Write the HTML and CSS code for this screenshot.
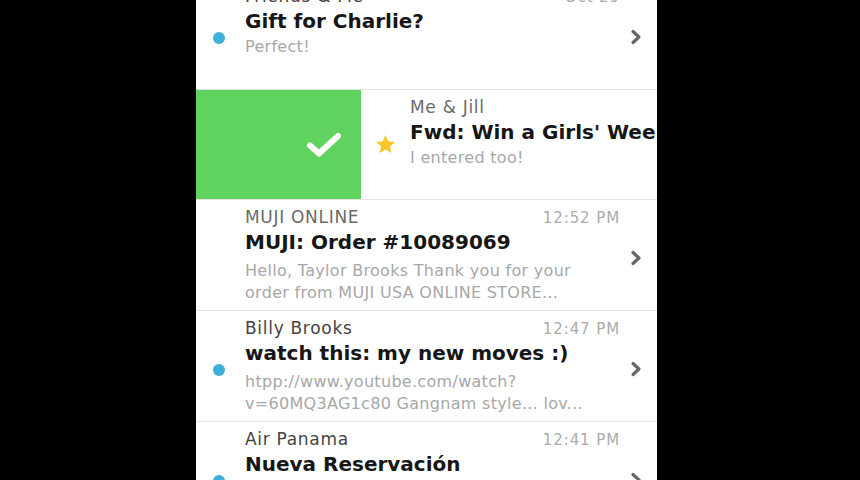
FILE: index.html
```html
<!DOCTYPE html>
<html lang="en">
<head>
<meta charset="utf-8">
<title>Inbox</title>
<link rel="stylesheet" href="styles.css">
</head>
<body>
<div class="screen">
  <div class="list">
    <div class="row">
      <div class="mark"><span class="dot"></span></div>
      <div class="body">
        <div class="head"><span class="sender unread">Friends &amp; Me</span><span class="time">Oct 29</span></div>
        <div class="subject">Gift for Charlie?</div>
        <div class="preview short">Perfect!</div>
      </div>
      <div class="nav"><svg class="chev" viewBox="0 0 12 16"><path d="M3 2.5 L9 8 L3 13.5"/></svg></div>
    </div>

    <div class="row swiped">
      <div class="action"><svg class="check" viewBox="0 0 36 26"><path d="M4 13.5 L13 21.5 L32 4"/></svg></div>
      <div class="content">
        <div class="mark"><svg class="star" viewBox="0 0 24 24"><path d="M12 2.2 L14.9 8.6 L21.9 9.3 L16.6 14 L18.2 20.9 L12 17.3 L5.8 20.9 L7.4 14 L2.1 9.3 L9.1 8.6 Z"/></svg></div>
        <div class="body">
          <div class="head"><span class="sender">Me &amp; Jill</span></div>
          <div class="subject">Fwd: Win a Girls' Weekend</div>
          <div class="preview short">I entered too!</div>
        </div>
      </div>
    </div>

    <div class="row">
      <div class="mark"></div>
      <div class="body">
        <div class="head"><span class="sender">MUJI ONLINE</span><span class="time">12:52 PM</span></div>
        <div class="subject">MUJI: Order #10089069</div>
        <div class="preview">Hello, Taylor Brooks Thank you for your<br>order from MUJI USA ONLINE STORE...</div>
      </div>
      <div class="nav"><svg class="chev" viewBox="0 0 12 16"><path d="M3 2.5 L9 8 L3 13.5"/></svg></div>
    </div>

    <div class="row">
      <div class="mark"><span class="dot"></span></div>
      <div class="body">
        <div class="head"><span class="sender unread">Billy Brooks</span><span class="time">12:47 PM</span></div>
        <div class="subject">watch this: my new moves :)</div>
        <div class="preview">htpp://www.youtube.com/watch?<br>v=60MQ3AG1c80 Gangnam style... lov...</div>
      </div>
      <div class="nav"><svg class="chev" viewBox="0 0 12 16"><path d="M3 2.5 L9 8 L3 13.5"/></svg></div>
    </div>

    <div class="row">
      <div class="mark"><span class="dot"></span></div>
      <div class="body">
        <div class="head"><span class="sender unread">Air Panama</span><span class="time">12:41 PM</span></div>
        <div class="subject">Nueva Reservación</div>
        <div class="preview">Estimado cliente, su reservación ha sido<br>confirmada...</div>
      </div>
      <div class="nav"><svg class="chev" viewBox="0 0 12 16"><path d="M3 2.5 L9 8 L3 13.5"/></svg></div>
    </div>
  </div>
</div>
</body>
</html>
```

FILE: styles.css
```css
html, body {
  margin: 0;
  padding: 0;
  background: #000;
  height: 100%;
  overflow: hidden;
}

.screen {
  margin-left: 196px;
  width: 461px;
  height: 480px;
  background: #fff;
  overflow: hidden;
  font-family: "DejaVu Sans", "Liberation Sans", sans-serif;
}

.list {
  margin-top: -21px;
}

.row {
  display: flex;
  height: 110px;
  border-bottom: 1px solid #e3e3e3;
  background: #fff;
  overflow: hidden;
}

.mark {
  width: 46px;
  flex-shrink: 0;
  display: flex;
  align-items: center;
  justify-content: center;
}

.dot {
  width: 12px;
  height: 12px;
  border-radius: 50%;
  background: #3db0da;
  margin-top: 8px;
}

.star {
  width: 23px;
  height: 23px;
  fill: #f8c52a;
  margin-left: 2px;
}

.body {
  flex: 1;
  min-width: 0;
  padding-left: 3px;
  padding-top: 6px;
}

.head {
  display: flex;
  justify-content: space-between;
  align-items: baseline;
  height: 22px;
}

.sender {
  font-size: 17px;
  line-height: 22px;
  letter-spacing: 0.7px;
  color: #6a6a6a;
  white-space: nowrap;
}

.sender.unread {
  color: #444;
}

.time {
  font-size: 15px;
  line-height: 22px;
  letter-spacing: 0.9px;
  color: #ababab;
  white-space: nowrap;
}

.subject {
  font-size: 20px;
  line-height: 28px;
  font-weight: bold;
  color: #161616;
  white-space: nowrap;
}

.preview {
  margin-top: 4px;
  font-size: 16px;
  line-height: 22px;
  letter-spacing: 0.3px;
  color: #a8a8a8;
  white-space: nowrap;
}

.preview.short {
  margin-top: 1px;
}

.nav {
  width: 37px;
  flex-shrink: 0;
  display: flex;
  align-items: center;
  padding-left: 10px;
  box-sizing: border-box;
}

.chev {
  width: 12px;
  height: 16px;
  margin-top: 5px;
  fill: none;
  stroke: #666;
  stroke-width: 3.2;
  stroke-linecap: round;
  stroke-linejoin: round;
}

.swiped {
  height: 109px;
}

.action {
  width: 165px;
  flex-shrink: 0;
  background: #5fd35e;
  display: flex;
  align-items: center;
  justify-content: flex-end;
  padding-right: 19px;
  box-sizing: border-box;
}

.check {
  width: 36px;
  height: 26px;
  fill: none;
  stroke: #fff;
  stroke-width: 6;
  stroke-linecap: round;
  stroke-linejoin: round;
}

.content {
  display: flex;
  width: 461px;
  flex-shrink: 0;
}
```
